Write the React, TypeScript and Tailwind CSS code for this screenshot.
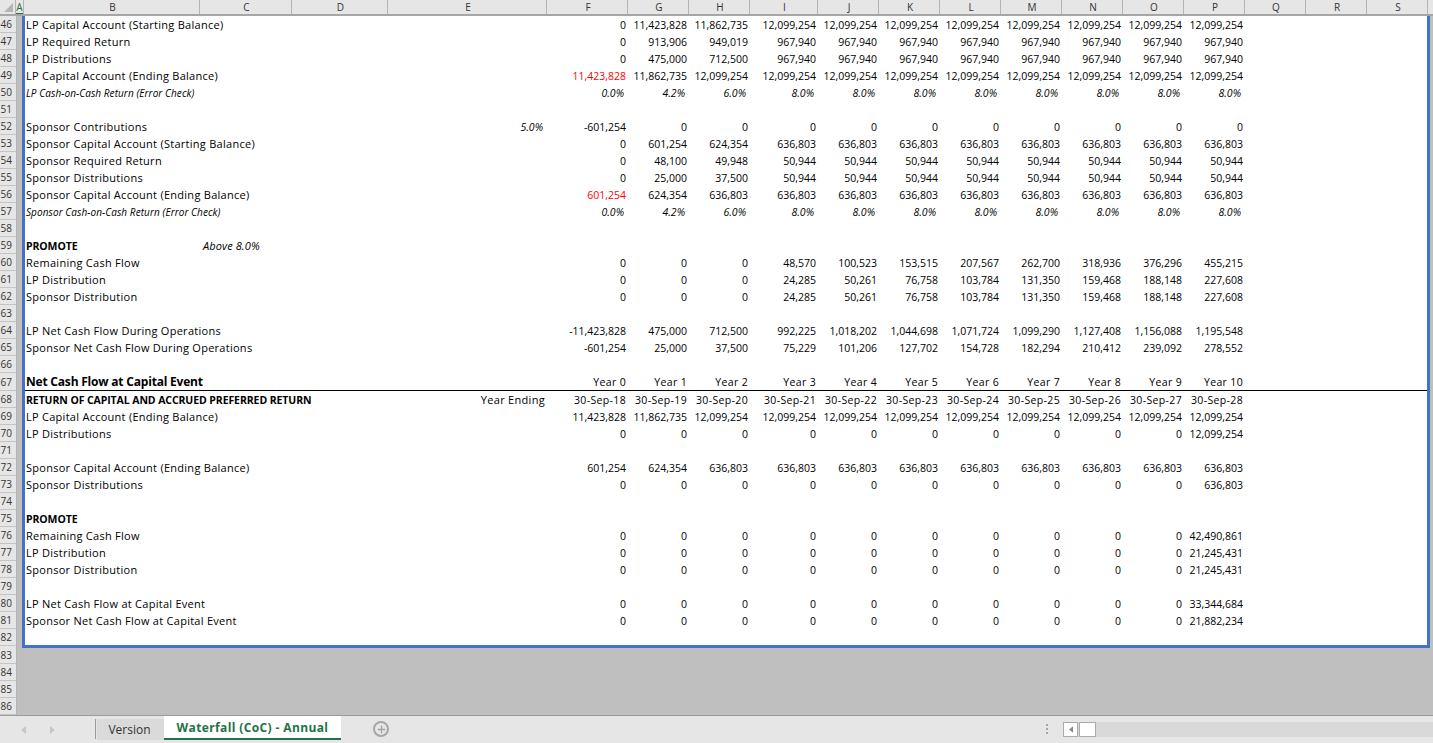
import React from 'react';
import { Plus } from 'lucide-react';

// ── data ────────────────────────────────────────────────────────────────
type Row = {
  n: number;
  label?: string;
  kind?: 'italic' | 'bold' | 'title';
  c?: string;
  e?: string;
  eItalic?: boolean;
  vals?: string[];
  red?: boolean;
  words?: boolean;
};

const rep = (v: string, n = 8) => Array(n).fill(v) as string[];
const pct = ['0.0%', '4.2%', '6.0%', ...rep('8.0%')];
const zeroThen = (last: string) => [...rep('0', 10), last];

const rows: Row[] = [
  { n: 46, label: 'LP Capital Account (Starting Balance)', vals: ['0', '11,423,828', '11,862,735', ...rep('12,099,254')] },
  { n: 47, label: 'LP Required Return', vals: ['0', '913,906', '949,019', ...rep('967,940')] },
  { n: 48, label: 'LP Distributions', vals: ['0', '475,000', '712,500', ...rep('967,940')] },
  { n: 49, label: 'LP Capital Account (Ending Balance)', red: true, vals: ['11,423,828', '11,862,735', '12,099,254', ...rep('12,099,254')] },
  { n: 50, label: 'LP Cash-on-Cash Return (Error Check)', kind: 'italic', vals: pct },
  { n: 51 },
  { n: 52, label: 'Sponsor Contributions', e: '5.0%', eItalic: true, vals: ['-601,254', ...rep('0', 10)] },
  { n: 53, label: 'Sponsor Capital Account (Starting Balance)', vals: ['0', '601,254', '624,354', ...rep('636,803')] },
  { n: 54, label: 'Sponsor Required Return', vals: ['0', '48,100', '49,948', ...rep('50,944')] },
  { n: 55, label: 'Sponsor Distributions', vals: ['0', '25,000', '37,500', ...rep('50,944')] },
  { n: 56, label: 'Sponsor Capital Account (Ending Balance)', red: true, vals: ['601,254', '624,354', '636,803', ...rep('636,803')] },
  { n: 57, label: 'Sponsor Cash-on-Cash Return (Error Check)', kind: 'italic', vals: pct },
  { n: 58 },
  { n: 59, label: 'PROMOTE', kind: 'bold', c: 'Above 8.0%' },
  { n: 60, label: 'Remaining Cash Flow', vals: ['0', '0', '0', '48,570', '100,523', '153,515', '207,567', '262,700', '318,936', '376,296', '455,215'] },
  { n: 61, label: 'LP Distribution', vals: ['0', '0', '0', '24,285', '50,261', '76,758', '103,784', '131,350', '159,468', '188,148', '227,608'] },
  { n: 62, label: 'Sponsor Distribution', vals: ['0', '0', '0', '24,285', '50,261', '76,758', '103,784', '131,350', '159,468', '188,148', '227,608'] },
  { n: 63 },
  { n: 64, label: 'LP Net Cash Flow During Operations', vals: ['-11,423,828', '475,000', '712,500', '992,225', '1,018,202', '1,044,698', '1,071,724', '1,099,290', '1,127,408', '1,156,088', '1,195,548'] },
  { n: 65, label: 'Sponsor Net Cash Flow During Operations', vals: ['-601,254', '25,000', '37,500', '75,229', '101,206', '127,702', '154,728', '182,294', '210,412', '239,092', '278,552'] },
  { n: 66 },
  { n: 67, label: 'Net Cash Flow at Capital Event', kind: 'title', words: true, vals: ['Year 0', 'Year 1', 'Year 2', 'Year 3', 'Year 4', 'Year 5', 'Year 6', 'Year 7', 'Year 8', 'Year 9', 'Year 10'] },
  { n: 68, label: 'RETURN OF CAPITAL AND ACCRUED PREFERRED RETURN', kind: 'bold', e: 'Year Ending', words: true, vals: ['30-Sep-18', '30-Sep-19', '30-Sep-20', '30-Sep-21', '30-Sep-22', '30-Sep-23', '30-Sep-24', '30-Sep-25', '30-Sep-26', '30-Sep-27', '30-Sep-28'] },
  { n: 69, label: 'LP Capital Account (Ending Balance)', vals: ['11,423,828', '11,862,735', '12,099,254', ...rep('12,099,254')] },
  { n: 70, label: 'LP Distributions', vals: zeroThen('12,099,254') },
  { n: 71 },
  { n: 72, label: 'Sponsor Capital Account (Ending Balance)', vals: ['601,254', '624,354', '636,803', ...rep('636,803')] },
  { n: 73, label: 'Sponsor Distributions', vals: zeroThen('636,803') },
  { n: 74 },
  { n: 75, label: 'PROMOTE', kind: 'bold' },
  { n: 76, label: 'Remaining Cash Flow', vals: zeroThen('42,490,861') },
  { n: 77, label: 'LP Distribution', vals: zeroThen('21,245,431') },
  { n: 78, label: 'Sponsor Distribution', vals: zeroThen('21,245,431') },
  { n: 79 },
  { n: 80, label: 'LP Net Cash Flow at Capital Event', vals: zeroThen('33,344,684') },
  { n: 81, label: 'Sponsor Net Cash Flow at Capital Event', vals: zeroThen('21,882,234') },
];

const headers = [
  { l: 'B', w: 'w-[176px]' },
  { l: 'C', w: 'w-[92px]' },
  { l: 'D', w: 'w-[96px]' },
  { l: 'E', w: 'w-[159px]' },
  { l: 'F', w: 'w-[81px]' },
  { l: 'G', w: 'w-[61px]' },
  { l: 'H', w: 'w-[61px]' },
  { l: 'I', w: 'w-[68px]' },
  { l: 'J', w: 'w-[61px]' },
  { l: 'K', w: 'w-[61px]' },
  { l: 'L', w: 'w-[61px]' },
  { l: 'M', w: 'w-[61px]' },
  { l: 'N', w: 'w-[61px]' },
  { l: 'O', w: 'w-[61px]' },
  { l: 'P', w: 'w-[61px]' },
  { l: 'Q', w: 'w-[61px]' },
  { l: 'R', w: 'w-[61px]' },
  { l: 'S', w: 'w-[61px]' },
];

const valWidths = ['w-[81px]', 'w-[61px]', 'w-[61px]', 'w-[68px]', 'w-[61px]', 'w-[61px]', 'w-[61px]', 'w-[61px]', 'w-[61px]', 'w-[61px]', 'w-[61px]'];

const gutter = Array.from({ length: 41 }, (_, i) => 46 + i);

// ── SheetRow ────────────────────────────────────────────────────────────
function SheetRow({ row }: { row: Row }) {
  const labelCls =
    row.kind === 'italic'
      ? 'italic text-[10px] tracking-[0.08px] pt-px leading-[16px]'
      : row.kind === 'bold'
        ? 'font-bold text-[10.5px] tracking-[-0.09px] pt-px leading-[16px]'
        : row.kind === 'title'
          ? 'font-bold text-[12px] tracking-[-0.2px] leading-[17px]'
          : 'text-[11px] tracking-[0.27px] leading-[17px]';

  return (
    <div className={`flex ${row.n === 67 ? 'h-[18px] border-b border-black' : 'h-[17px]'} items-start whitespace-nowrap`}>
      <div className={`w-[175px] pl-px ${labelCls}`}>{row.label}</div>
      <div className="w-[92px] pl-[3px] pt-px italic text-[11px] tracking-[0.1px] leading-[16px]">{row.c}</div>
      <div className="w-[96px]" />
      <div className={`w-[159px] text-right pt-px leading-[16px] ${row.eItalic ? 'pr-1 italic text-[10.5px]' : 'pr-0.5 text-[11px] tracking-[0.3px]'}`}>{row.e}</div>
      {row.vals?.map((v, i) => (
        <div
          key={i}
          className={`${valWidths[i]} text-right pt-px leading-[16px] ${
            row.kind === 'italic' ? 'italic text-[10.5px] pr-1' : 'text-[10.5px] pr-0.5'
          } ${row.words ? 'tracking-[0.35px]' : ''} ${row.red && i === 0 ? 'text-[#ff0000]' : ''}`}
        >
          {v}
        </div>
      ))}
    </div>
  );
}

// ── Tab bar ─────────────────────────────────────────────────────────────
function Triangle({ dir, cls }: { dir: 'l' | 'r'; cls: string }) {
  return (
    <svg width="5" height="8" viewBox="0 0 5 8" className={cls}>
      <path d={dir === 'l' ? 'M5 0 L0 4 L5 8 Z' : 'M0 0 L5 4 L0 8 Z'} fill="currentColor" />
    </svg>
  );
}

function TabBar() {
  return (
    <div className="h-[28px] shrink-0 bg-[#e6e6e6] border-t border-[#9b9b9b] flex items-stretch">
      <div className="w-[95px] flex items-center pl-[21px] gap-[24px]">
        <Triangle dir="l" cls="text-[#c6c6c6]" />
        <Triangle dir="r" cls="text-[#c6c6c6]" />
      </div>
      <div className="w-px bg-[#9b9b9b] mt-[3px] mb-[4px]" />
      <div className="w-px" />
      <div className="w-[67px] mt-[3px] mb-[3px] bg-[#dadada] flex items-center justify-center text-[12px] text-[#333] pr-0.5">Version</div>
      <div className="w-[177px] bg-white border-b-2 border-[#217346] mb-[3px] flex items-center justify-center text-[12px] tracking-[0.38px] font-bold text-[#217346] pt-px">
        Waterfall (CoC) - Annual
      </div>
      <div className="w-[32px]" />
      <div className="flex items-center mb-px">
        <div className="w-4 h-4 rounded-full border-2 border-[#a6a6a6] flex items-center justify-center text-[#a6a6a6]">
          <Plus size={11} strokeWidth={3} />
        </div>
      </div>
      <div className="w-[657px]" />
      <div className="flex flex-col justify-center gap-[2px] mb-px">
        <div className="w-[2px] h-[2px] bg-[#a6a6a6]" />
        <div className="w-[2px] h-[2px] bg-[#a6a6a6]" />
        <div className="w-[2px] h-[2px] bg-[#a6a6a6]" />
      </div>
      <div className="w-[15px]" />
      <div className="flex-1 my-[6px] bg-[#d9d9d9] flex items-stretch">
        <div className="w-[15px] bg-white border border-[#ababab] flex items-center justify-center text-[#8a8a8a]">
          <Triangle dir="l" cls="w-[4px] h-[7px]" />
        </div>
        <div className="w-[17px] ml-px bg-white border border-[#ababab]" />
      </div>
    </div>
  );
}

export default function App() {
  return (
    <div className="w-[1433px] h-[743px] overflow-hidden flex flex-col bg-[#bfbfbf] text-black font-['Open_Sans',sans-serif]">
      {/* column headers */}
      <div className="h-4 shrink-0 flex bg-[#e6e6e6] border-b-2 border-[#a6a6a6] text-[10px] leading-[14px] text-[#333]">
        <div className="w-[16px] flex items-end justify-end pr-0.5 pb-0.5 border-r border-[#b4b4b4]">
          <div className="w-0 h-0 border-l-[9px] border-l-transparent border-b-[9px] border-b-[#b4b4b4]" />
        </div>
        <div className="w-[8px] text-center text-[#217346] border-r border-[#b4b4b4] relative">
          A
          <div className="absolute left-0 right-0 bottom-0 h-px bg-[#217346]" />
        </div>
        {headers.map((h) => (
          <div key={h.l} className={`${h.w} pl-0.5 text-center border-r border-[#b4b4b4]`}>{h.l}</div>
        ))}
      </div>

      <div className="flex-1 flex min-h-0 overflow-hidden">
        {/* row numbers */}
        <div className="w-[17px] shrink-0 bg-[#e6e6e6] border-r border-[#b4b4b4] overflow-hidden">
          {gutter.map((n) => (
            <div
              key={n}
              className={`${n === 67 || n === 83 ? 'h-[18px] leading-[18px]' : 'h-[17px] leading-[17px]'} border-b border-[#c4c4c4] text-[10px] text-[#333] flex justify-end pr-1 whitespace-nowrap`}
            >
              {n}
            </div>
          ))}
        </div>

        {/* model block */}
        <div className="ml-[5px] w-[1408px] h-[632px] shrink-0 bg-white border-x-[3px] border-b-[3px] border-[#4472c4]">
          {rows.map((r) => (
            <SheetRow key={r.n} row={r} />
          ))}
        </div>
      </div>

      <TabBar />
    </div>
  );
}
